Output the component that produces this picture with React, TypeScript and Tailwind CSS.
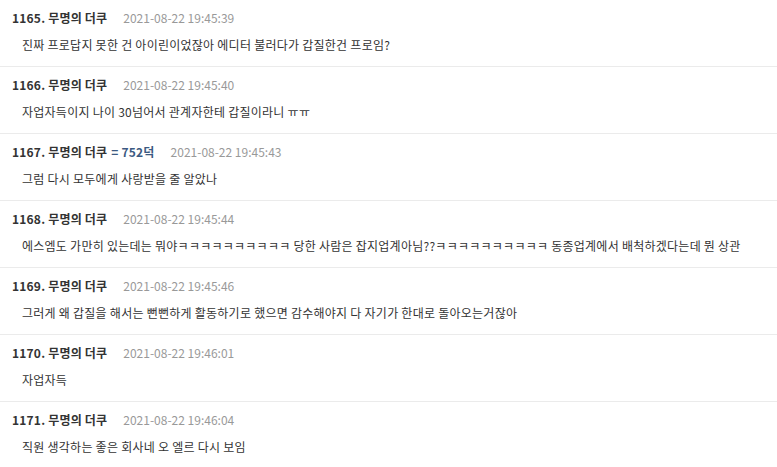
type Comment = {
  no: number
  name: string
  badge?: string
  date: string
  text: string
}

const comments: Comment[] = [
  { no: 1165, name: '무명의 더쿠', date: '2021-08-22 19:45:39', text: '진짜 프로답지 못한 건 아이린이었잖아 에디터 불러다가 갑질한건 프로임?' },
  { no: 1166, name: '무명의 더쿠', date: '2021-08-22 19:45:40', text: '자업자득이지 나이 30넘어서 관계자한테 갑질이라니 ㅠㅠ' },
  { no: 1167, name: '무명의 더쿠', badge: '= 752덕', date: '2021-08-22 19:45:43', text: '그럼 다시 모두에게 사랑받을 줄 알았나' },
  {
    no: 1168,
    name: '무명의 더쿠',
    date: '2021-08-22 19:45:44',
    text: '에스엠도 가만히 있는데는 뭐야ㅋㅋㅋㅋㅋㅋㅋㅋㅋㅋ 당한 사람은 잡지업계아님??ㅋㅋㅋㅋㅋㅋㅋㅋㅋㅋ 동종업계에서 배척하겠다는데 뭔 상관',
  },
  { no: 1169, name: '무명의 더쿠', date: '2021-08-22 19:45:46', text: '그러게 왜 갑질을 해서는 뻔뻔하게 활동하기로 했으면 감수해야지 다 자기가 한대로 돌아오는거잖아' },
  { no: 1170, name: '무명의 더쿠', date: '2021-08-22 19:46:01', text: '자업자득' },
  { no: 1171, name: '무명의 더쿠', date: '2021-08-22 19:46:04', text: '직원 생각하는 좋은 회사네 오 엘르 다시 보임' },
]

export default function App() {
  return (
    <div className="w-full bg-white text-[12px] text-[#333] [font-family:'Noto_Sans_CJK_KR','Noto_Sans',sans-serif]">
      {comments.map((c) => (
        <div key={c.no} className="border-b border-[#ebebeb] px-3 pt-[10px] pb-[13px]">
          {/* header: number, nick, date */}
          <div className="flex h-4 items-center leading-4">
            <span className="font-bold tracking-[0.2px]">
              {c.no}. {c.name}
              {c.badge && <span className="ml-1 text-[#3c5a82]">{c.badge}</span>}
            </span>
            <span className="ml-4 text-[#999]">{c.date}</span>
          </div>
          <div className="mt-[11px] whitespace-nowrap pl-[10px] leading-4 tracking-[0.25px]">{c.text}</div>
        </div>
      ))}
    </div>
  )
}
